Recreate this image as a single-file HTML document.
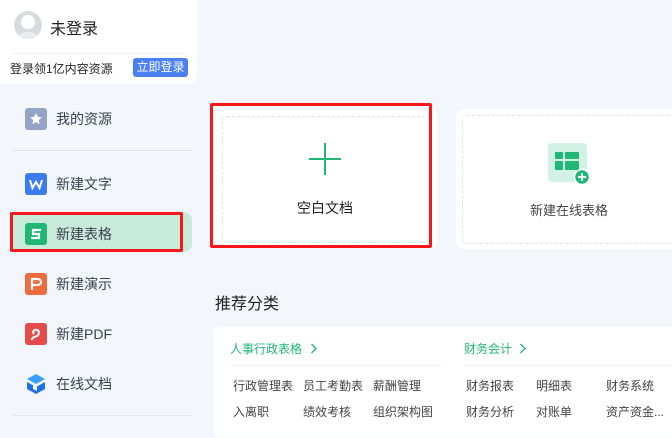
<!DOCTYPE html><html><head><meta charset="utf-8"><style>
*{margin:0;padding:0;box-sizing:border-box}
body{width:672px;height:438px;background:#f3f6fa;font-family:"Liberation Sans","Noto Sans CJK SC",sans-serif;position:relative;overflow:hidden;color:#333}
.a{position:absolute}
.nav{position:absolute;left:56px;font-size:14px;color:#3a3f4a;line-height:20px}
.ic{position:absolute;left:25px;width:22px;height:22px;border-radius:3px}
.t{position:absolute;font-size:12px;color:#444;line-height:16px}
</style></head><body>
<div class="a" style="left:0;top:0;width:197px;height:84px;background:#fff;border-radius:0 0 8px 0"></div>
<div class="a" style="left:14px;top:11px;width:28px;height:28px;border-radius:50%;background:#d8dbe0;overflow:hidden">
<div class="a" style="left:7px;top:4px;width:14px;height:14px;border-radius:50%;background:#fff"></div>
<div class="a" style="left:3px;top:21px;width:22px;height:14px;border-radius:50%;background:#e9ebee"></div></div>
<div class="a" style="left:50px;top:15px;font-size:16px;color:#222">未登录</div>
<div class="a" style="left:12px;top:53px;width:175px;height:1px;background:#eceef1"></div>
<div class="a" style="left:10px;top:60px;font-size:12px;color:#222">登录领1亿内容资源</div>
<div class="a" style="left:133px;top:58px;width:55px;height:19px;background:#4b80f5;border-radius:3px;color:#fff;font-size:12px;text-align:center;line-height:19px">立即登录</div>

<div class="ic" style="top:108px;background:#94a3c6"><svg width="22" height="22"><path d="M11 5l1.8 3.8 4 .5-3 2.8.8 4-3.6-2-3.6 2 .8-4-3-2.8 4-.5z" fill="#fff"/></svg></div>
<div class="nav" style="top:109px">我的资源</div>
<div class="a" style="left:12px;top:150px;width:180px;height:1px;background:#e4e7ec"></div>
<div class="ic" style="top:173px;background:#3b7cf3"><svg width="22" height="22"><path d="M5 7l2.5 8 3.5-6 3.5 6 2.5-8" stroke="#fff" stroke-width="2" fill="none"/></svg></div>
<div class="nav" style="top:174px">新建文字</div>
<div class="a" style="left:10px;top:212px;width:182px;height:40px;background:#c8eadb;border-radius:0 8px 8px 0"></div>
<div class="a" style="left:10px;top:212px;width:173px;height:40px;border:3px solid #f5171a;border-radius:2px"></div>
<div class="ic" style="top:223px;background:#1fb776"><svg width="22" height="22"><path d="M16 7H8v4h6v4H6" stroke="#fff" stroke-width="2.2" fill="none"/></svg></div>
<div class="nav" style="top:224px">新建表格</div>
<div class="ic" style="top:273px;background:#ef6a3c"><svg width="22" height="22"><path d="M7 17V6h6a3 3 0 010 6H8" stroke="#fff" stroke-width="2.2" fill="none"/></svg></div>
<div class="nav" style="top:274px">新建演示</div>
<div class="ic" style="top:323px;background:#e54b4b"><svg width="22" height="22"><path d="M7 17c0-3 3-3 5-4s3-5 0-6-5 2-3 4" stroke="#fff" stroke-width="2" fill="none"/></svg></div>
<div class="nav" style="top:324px">新建PDF</div>
<div class="ic" style="top:373px"><svg width="22" height="22"><path d="M11 1l9 5-9 5-9-5z" fill="#3aa0ff"/><path d="M2 9l9 5 9-5v7l-9 5-9-5z" fill="#1f6fe8"/><path d="M8 12l4 2v4l-4-2z" fill="#fff"/></svg></div>
<div class="nav" style="top:374px">在线文档</div>
<div class="a" style="left:12px;top:415px;width:180px;height:1px;background:#e4e7ec"></div>

<div class="a" style="left:215px;top:109px;width:222px;height:139px;background:#fff;border-radius:8px"></div>
<div class="a" style="left:222px;top:116px;width:208px;height:127px;border:1px dashed #d5ece3;border-radius:5px"></div>
<div class="a" style="left:210px;top:103px;width:222px;height:145px;border:3px solid #f5171a;border-radius:2px"></div>
<div class="a" style="left:309px;top:158px;width:32px;height:2px;background:#1fb776"></div>
<div class="a" style="left:324px;top:143px;width:2px;height:32px;background:#1fb776"></div>
<div class="a" style="left:297px;top:198px;font-size:14px;color:#222">空白文档</div>

<div class="a" style="left:456px;top:109px;width:230px;height:140px;background:#fff;border-radius:8px"></div>
<div class="a" style="left:462px;top:115px;width:220px;height:129px;border:1px dashed #d5ece3;border-radius:5px"></div>
<div class="a" style="left:548px;top:143px;width:39px;height:39px;background:#d3f2e6;border-radius:4px"></div>
<svg class="a" style="left:555px;top:151px" width="34" height="34"><rect x="0" y="1" width="8" height="7" rx="1" fill="#1fb776"/><rect x="10" y="1" width="14" height="7" rx="1" fill="#1fb776"/><rect x="0" y="10" width="8" height="9" rx="1" fill="#1fb776"/><rect x="10" y="10" width="14" height="9" rx="1" fill="#1fb776"/><circle cx="27" cy="26" r="7.5" fill="#1fb776" stroke="#fff" stroke-width="1.5"/><path d="M27 22v8M23 26h8" stroke="#fff" stroke-width="2"/></svg>
<div class="a" style="left:530px;top:200px;font-size:13px;color:#444">新建在线表格</div>

<div class="a" style="left:215px;top:290px;font-size:16px;color:#222">推荐分类</div>
<div class="a" style="left:214px;top:327px;width:470px;height:110px;background:#fff;border-radius:6px"></div>
<div class="a" style="left:230px;top:340px;font-size:12px;color:#1fb776">人事行政表格</div>
<svg class="a" style="left:310px;top:343px" width="8" height="11"><path d="M1.5 1l4.5 4.5-4.5 4.5" stroke="#1fb776" stroke-width="1.4" fill="none"/></svg>
<div class="a" style="left:464px;top:340px;font-size:12px;color:#1fb776">财务会计</div>
<svg class="a" style="left:519px;top:343px" width="8" height="11"><path d="M1.5 1l4.5 4.5-4.5 4.5" stroke="#1fb776" stroke-width="1.4" fill="none"/></svg>
<div class="a" style="left:231px;top:365px;width:210px;height:1px;background:#eceef1"></div>
<div class="a" style="left:464px;top:365px;width:210px;height:1px;background:#eceef1"></div>
<div class="t" style="left:233px;top:378px">行政管理表</div><div class="t" style="left:303px;top:378px">员工考勤表</div><div class="t" style="left:373px;top:378px">薪酬管理</div>
<div class="t" style="left:466px;top:378px">财务报表</div><div class="t" style="left:536px;top:378px">明细表</div><div class="t" style="left:606px;top:378px">财务系统</div>
<div class="t" style="left:233px;top:404px">入离职</div><div class="t" style="left:303px;top:404px">绩效考核</div><div class="t" style="left:373px;top:404px">组织架构图</div>
<div class="t" style="left:466px;top:404px">财务分析</div><div class="t" style="left:536px;top:404px">对账单</div><div class="t" style="left:606px;top:404px">资产资金...</div>
</body></html>
